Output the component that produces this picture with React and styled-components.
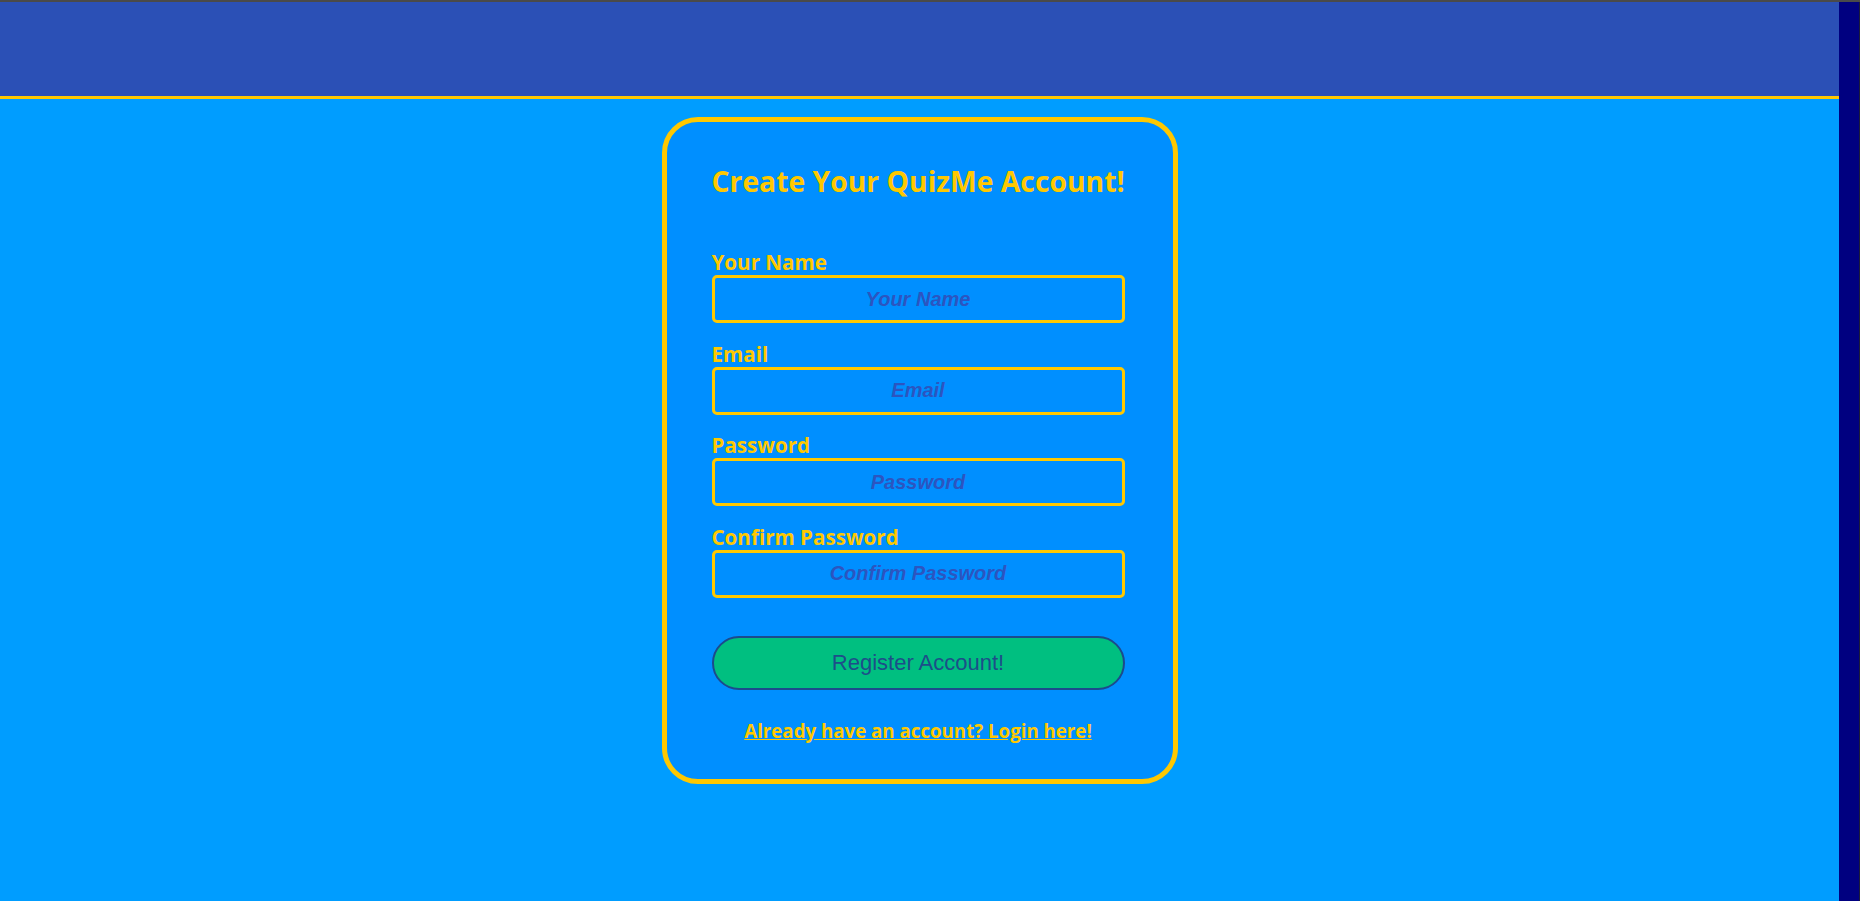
import React from "react";
import styled, { createGlobalStyle } from "styled-components";

const GlobalStyle = createGlobalStyle`
  * {
    box-sizing: border-box;
  }
  html,
  body {
    margin: 0;
    padding: 0;
    background: #009dff;
    font-family: "Open Sans", "Noto Sans", sans-serif;
  }
`;

const fields = [
  { id: "name", label: "Your Name", type: "text" },
  { id: "email", label: "Email", type: "email" },
  { id: "password", label: "Password", type: "password" },
  { id: "confirm", label: "Confirm Password", type: "password" },
];

const App = () => {
  return (
    <Page>
      <GlobalStyle />
      <Main>
        <Header />
        <Content>
          <Card>
            <Title>Create Your QuizMe Account!</Title>
            <Form onSubmit={(e) => e.preventDefault()}>
              {fields.map((f) => (
                <Field key={f.id}>
                  <Label htmlFor={f.id}>{f.label}</Label>
                  <Input id={f.id} type={f.type} placeholder={f.label} />
                </Field>
              ))}
              <RegisterButton type="submit">Register Account!</RegisterButton>
            </Form>
            <LoginLink href="#">Already have an account? Login here!</LoginLink>
          </Card>
        </Content>
      </Main>
      <ScrollTrack />
    </Page>
  );
};

const Page = styled.div`
  display: flex;
  min-height: 100vh;
  border-top: 2px solid #4a4a4a;
`;

const Main = styled.div`
  flex: 1;
  display: flex;
  flex-direction: column;
`;

const Header = styled.header`
  height: 97px;
  background: #2b50b6;
  border-bottom: 3px solid #ffc800;
`;

const Content = styled.main`
  flex: 1;
  display: flex;
  justify-content: center;
  align-items: flex-start;
  padding-top: 18px;
  background: #009dff;
`;

const Card = styled.div`
  width: 516px;
  padding: 40px 48px 36px 45px;
  background: #008fff;
  border: 5px solid #ffc800;
  border-radius: 36px;
`;

const Title = styled.h1`
  margin: 0 0 49px;
  color: #ffc800;
  font-size: 28.3px;
  font-weight: 700;
  line-height: 38px;
  white-space: nowrap;
`;

const Form = styled.form`
  width: 413px;
  display: flex;
  flex-direction: column;
  gap: 17.5px;
`;

const Field = styled.div`
  display: flex;
  flex-direction: column;
`;

const Label = styled.label`
  color: #ffc800;
  font-size: 20.6px;
  font-weight: 700;
  line-height: 26px;
`;

const Input = styled.input`
  width: 100%;
  height: 48px;
  border: 3px solid #ffc800;
  border-radius: 5px;
  background: transparent;
  text-align: center;
  font-family: "Liberation Sans", Arial, sans-serif;
  font-size: 20px;
  font-weight: 700;
  font-style: italic;
  color: #2c55c0;
  outline: none;

  &::placeholder {
    color: #2c55c0;
    opacity: 1;
  }
`;

const RegisterButton = styled.button`
  margin-top: 20.5px;
  width: 100%;
  height: 54px;
  background: #00bf80;
  border: 2px solid #1c4a8c;
  border-radius: 27px;
  color: #1d4e89;
  font-family: "Liberation Sans", Arial, sans-serif;
  font-size: 22px;
  cursor: pointer;
`;

const LoginLink = styled.a`
  display: block;
  width: 413px;
  margin-top: 29px;
  text-align: center;
  color: #ffc800;
  font-size: 18.7px;
  font-weight: 700;
  line-height: 24px;
  text-decoration: underline;
`;

const ScrollTrack = styled.div`
  width: 21px;
  flex-shrink: 0;
  background: #000080;
  border-right: 1px solid #1c1c3a;
`;

export default App;
